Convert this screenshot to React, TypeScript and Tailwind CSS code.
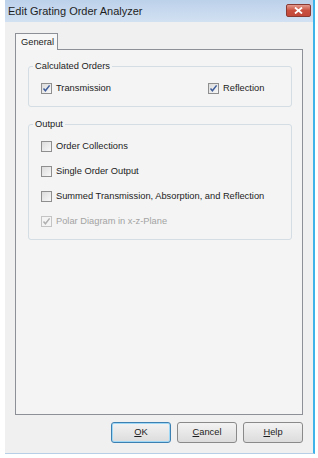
import React from "react";

/* Small Win7-style checkbox with optional tick */
function CheckBox({ checked, disabled }: { checked?: boolean; disabled?: boolean }) {
  return (
    <div
      className={`h-[11px] w-[11px] shrink-0 border flex items-center justify-center ${
        disabled
          ? "border-[#c4c4c4] bg-[#f4f4f4]"
          : "border-[#8f8f8f] bg-gradient-to-br from-[#dcdcdc] to-[#f8f8f8]"
      }`}
    >
      {checked && (
        <svg width="9" height="9" viewBox="0 0 9 9">
          <path
            d="M1.5 4.6 L3.4 6.8 L7.6 1.4"
            fill="none"
            stroke={disabled ? "#b0b0b0" : "#3f5d9a"}
            strokeWidth="1.5"
          />
        </svg>
      )}
    </div>
  );
}

function Option({
  label,
  checked,
  disabled,
  className = "",
}: {
  label: string;
  checked?: boolean;
  disabled?: boolean;
  className?: string;
}) {
  return (
    <div className={`flex items-center gap-[4px] h-[13px] ${className}`}>
      <CheckBox checked={checked} disabled={disabled} />
      <span className={`leading-[13px] ${disabled ? "text-[#a3a3a3]" : "text-[#1c1c1c]"}`}>{label}</span>
    </div>
  );
}

function DialogButton({ hot, rest, primary }: { hot: string; rest: string; primary?: boolean }) {
  return (
    <button
      className={`h-[21px] w-[60px] rounded-[3px] border text-[#1c1c1c] bg-gradient-to-b from-[#f3f3f3] to-[#dcdcdc] ${
        primary ? "border-[#3c7fb1] shadow-[inset_0_0_0_1px_#9fd7f7]" : "border-[#8a8a8a]"
      }`}
    >
      <span className="underline">{hot}</span>
      {rest}
    </button>
  );
}

export default function App() {
  return (
    <div
      className="w-[318px] h-[458px] bg-white text-[9.3px]"
      style={{ fontFamily: '"Liberation Sans", Arial, sans-serif' }}
    >
      <div className="ml-[5px] w-[310px] h-[454px] bg-[#f0f0f0] border-r-2 border-r-[#3db3ea] border-b border-b-[#b8cfe8] flex flex-col">
        {/* Title bar */}
        <div className="h-[22px] flex items-center justify-between pl-[3px] pr-[2px] bg-gradient-to-b from-[#bcd1ea] to-[#d2e1f2]">
          <span className="text-[11px] text-[#1e1e1e]">Edit Grating Order Analyzer</span>
          <div className="h-[13px] w-[25px] -mt-[2px] rounded-[2px] border border-[#8a3a33] bg-gradient-to-b from-[#e29a8f] via-[#c9503f] to-[#c2483a] flex items-center justify-center">
            <svg width="9" height="7" viewBox="0 0 9 7">
              <path d="M1 0.5 L8 6.5 M8 0.5 L1 6.5" stroke="#ffffff" strokeWidth="1.8" />
            </svg>
          </div>
        </div>

        {/* Body */}
        <div className="px-[10px] pt-[11px] flex flex-col">
          <div className="flex">
            <div className="relative z-10 -mb-px h-[17px] w-[43px] border border-b-0 border-[#8d9096] bg-[#f7f7f7] pl-[5px] pt-[2px] text-[#1c1c1c]">
              General
            </div>
          </div>

          <div className="h-[366px] border border-[#8d9096] bg-[#f4f4f4] pl-[12px] pr-[10px] pt-[10px]">
            <fieldset className="rounded-[3px] border border-[#d3dde3] pt-[9px] pb-[11px]">
              <legend className="ml-[4px] px-[2px] leading-[13px] text-[#1c1c1c]">Calculated Orders</legend>
              <div className="flex pl-[12px]">
                <Option label="Transmission" checked className="w-[167px]" />
                <Option label="Reflection" checked />
              </div>
            </fieldset>

            <fieldset className="mt-[11px] rounded-[3px] border border-[#d3dde3] pt-[9px] pb-[11px]">
              <legend className="ml-[4px] px-[2px] leading-[13px] text-[#1c1c1c]">Output</legend>
              <div className="flex flex-col gap-[12px] pl-[12px]">
                <Option label="Order Collections" />
                <Option label="Single Order Output" />
                <Option label="Summed Transmission, Absorption, and Reflection" />
                <Option label="Polar Diagram in x-z-Plane" checked disabled />
              </div>
            </fieldset>
          </div>

          <div className="mt-[7px] flex justify-end gap-[6px]">
            <DialogButton hot="O" rest="K" primary />
            <DialogButton hot="C" rest="ancel" />
            <DialogButton hot="H" rest="elp" />
          </div>
        </div>
      </div>
    </div>
  );
}
